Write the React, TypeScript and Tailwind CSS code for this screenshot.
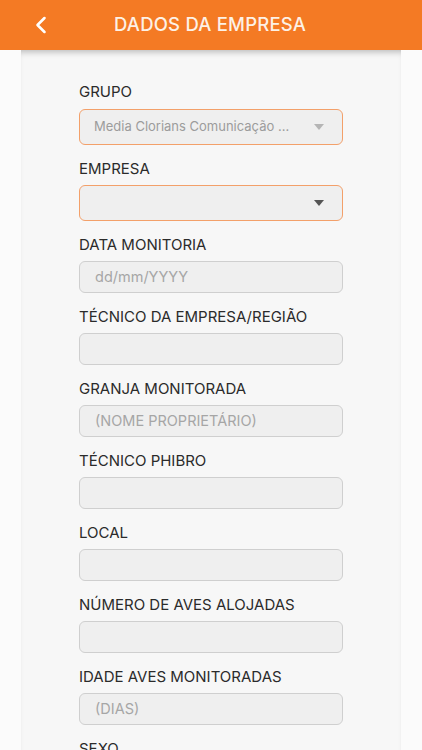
import { ChevronLeft } from "lucide-react";

type Field = { label: string; placeholder?: string };

const fields: Field[] = [
  { label: "DATA MONITORIA", placeholder: "dd/mm/YYYY" },
  { label: "TÉCNICO DA EMPRESA/REGIÃO" },
  { label: "GRANJA MONITORADA", placeholder: "(NOME PROPRIETÁRIO)" },
  { label: "TÉCNICO PHIBRO" },
  { label: "LOCAL" },
  { label: "NÚMERO DE AVES ALOJADAS" },
  { label: "IDADE AVES MONITORADAS", placeholder: "(DIAS)" },
  { label: "SEXO" },
];

const Caret = ({ light }: { light?: boolean }) => (
  <svg width="10" height="6" viewBox="0 0 10 6" className={light ? "fill-[#b5b5b5]" : "fill-[#555]"}>
    <path d="M0 0h10L5 6z" />
  </svg>
);

const App = () => {
  return (
    <div
      className="h-[750px] w-[422px] overflow-hidden bg-[#fbfbfb]"
      style={{ fontFamily: "Inter, 'Noto Sans', sans-serif" }}
    >
      <header className="relative z-10 flex h-[50px] items-center bg-[#f47a24] pl-[27px]">
        <ChevronLeft className="h-7 w-7 text-white" strokeWidth={2.2} />
        <h1 className="ml-[59px] text-[18.5px] font-medium tracking-[0.2px] text-[#fdf1e6]">DADOS DA EMPRESA</h1>
      </header>

      <main className="mx-[21px] h-[700px] bg-[#f7f7f7] px-[58px] pt-[32px] shadow-[inset_0_6px_6px_-4px_rgba(0,0,0,0.25)]">
        <div className="flex flex-col">
          <label className="text-[15px] leading-[20px] text-[#2b2b2b]">GRUPO</label>
          <div className="mt-[7px] flex h-[36px] items-center justify-between rounded-[6px] border border-[#f3a06a] bg-[#efefef] pl-[14px] pr-[18px]">
            <span className="text-[13px] text-[#9c9c9c]">Media Clorians Comunicação ...</span>
            <Caret light />
          </div>

          <label className="mt-[14px] text-[15px] leading-[20px] text-[#2b2b2b]">EMPRESA</label>
          <div className="mt-[6px] flex h-[36px] items-center justify-end rounded-[6px] border border-[#f3a06a] bg-[#efefef] pr-[18px]">
            <Caret />
          </div>

          {fields.map((f) => (
            <div key={f.label} className="mt-[14px] flex flex-col">
              <label className="text-[15px] leading-[20px] text-[#2b2b2b]">{f.label}</label>
              <div className="mt-[6px] flex h-[32px] items-center rounded-[6px] border border-[#cfcfcf] bg-[#efefef] px-[15px]">
                <span className="text-[14.5px] text-[#a6a6a6]">{f.placeholder ?? ""}</span>
              </div>
            </div>
          ))}
        </div>
      </main>
    </div>
  );
};

export default App;
